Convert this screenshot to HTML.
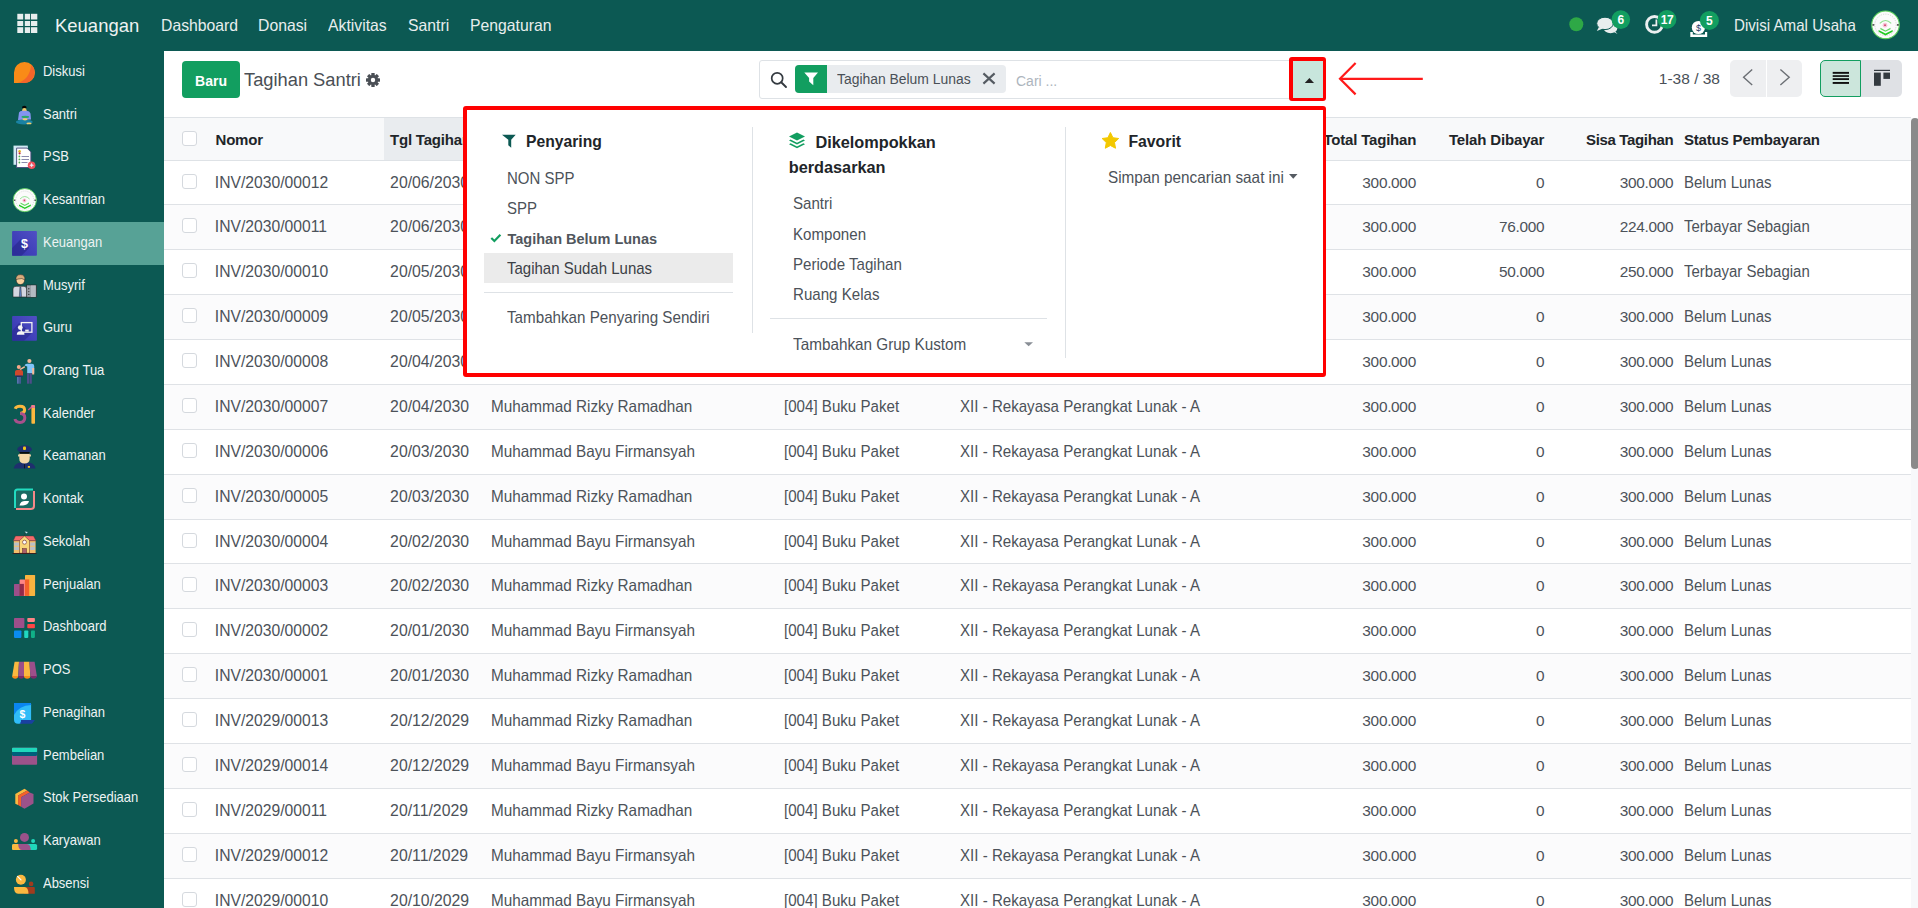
<!DOCTYPE html><html><head><meta charset="utf-8"><style>
html,body{margin:0;padding:0}
body{width:1918px;height:908px;position:relative;overflow:hidden;background:#fff;font-family:"Liberation Sans",sans-serif}
.t{position:absolute;white-space:nowrap;line-height:1.117}
</style></head><body>
<div style="position:absolute;left:0px;top:0px;width:1918px;height:51px;background:#0c5953"></div>
<div style="position:absolute;left:164px;top:51px;width:1754px;height:857px;background:#fff"></div>
<div style="position:absolute;left:0px;top:51px;width:164px;height:857px;background:#0c5953"></div>
<svg style="position:absolute;left:0px;top:0px" width="50" height="50" viewBox="0 0 50 50"><rect x="17.3" y="13.8" width="5.9" height="5.7" fill="#e8eeee"/><rect x="17.3" y="21" width="5.9" height="5" fill="#e8eeee"/><rect x="17.3" y="27.2" width="5.9" height="5.8" fill="#e8eeee"/><rect x="24.8" y="13.8" width="5.3" height="5.7" fill="#e8eeee"/><rect x="24.8" y="21" width="5.3" height="5" fill="#e8eeee"/><rect x="24.8" y="27.2" width="5.3" height="5.8" fill="#e8eeee"/><rect x="31" y="13.8" width="6.3" height="5.7" fill="#e8eeee"/><rect x="31" y="21" width="6.3" height="5" fill="#e8eeee"/><rect x="31" y="27.2" width="6.3" height="5.8" fill="#e8eeee"/></svg>
<div class="t" style="left:54.50px;top:15px;line-height:21px;font-size:19px;color:#eef2f2;transform:scaleX(0.972);transform-origin:0 0;">Keuangan</div>
<div class="t" style="left:160.50px;top:16px;line-height:18px;font-size:16.5px;color:#e8eeee;transform:scaleX(0.955);transform-origin:0 0;">Dashboard</div>
<div class="t" style="left:258.40px;top:16px;line-height:18px;font-size:16.5px;color:#e8eeee;transform:scaleX(0.955);transform-origin:0 0;">Donasi</div>
<div class="t" style="left:327.50px;top:16px;line-height:18px;font-size:16.5px;color:#e8eeee;transform:scaleX(0.955);transform-origin:0 0;">Aktivitas</div>
<div class="t" style="left:408.00px;top:16px;line-height:18px;font-size:16.5px;color:#e8eeee;transform:scaleX(0.955);transform-origin:0 0;">Santri</div>
<div class="t" style="left:470.00px;top:16px;line-height:18px;font-size:16.5px;color:#e8eeee;transform:scaleX(0.955);transform-origin:0 0;">Pengaturan</div>
<svg style="position:absolute;left:1560px;top:0px" width="170" height="51" viewBox="1560 0 170 51"><circle cx="1576.3" cy="24.3" r="7" fill="#2ea846"/><ellipse cx="1610.5" cy="28.6" rx="6.8" ry="4.6" fill="#e8eeee"/><path d="M1612 31 L1617.5 34 L1613 29 Z" fill="#e8eeee"/><ellipse cx="1605" cy="23.4" rx="8.3" ry="6.2" fill="#e8eeee" stroke="#0c5953" stroke-width="1"/><path d="M1599 27 L1596.8 31 L1603 28.5 Z" fill="#e8eeee"/><circle cx="1654.5" cy="24.4" r="7.9" fill="none" stroke="#eceff0" stroke-width="2.9"/><path d="M1656.4 19.6 V25.4 H1652" fill="none" stroke="#eceff0" stroke-width="1.8"/><path d="M1690.3 32.1 H1692.8 V34.6 H1705 V32.1 H1707.2 V36.9 H1690.3 Z" fill="#ffffff"/><circle cx="1698.4" cy="27.5" r="6.6" fill="#ffffff"/><text x="1698.6" y="31.2" font-size="9" font-weight="400" text-anchor="middle" fill="#1a3a6a" font-family="Liberation Sans">$</text><circle cx="1620.8" cy="19.6" r="9.3" fill="#129e60"/><circle cx="1667" cy="19.4" r="9.4" fill="#129e60"/><circle cx="1709.4" cy="20.4" r="9.5" fill="#129e60"/><text x="1620.8" y="24" font-size="12" font-weight="700" text-anchor="middle" fill="#fff" font-family="Liberation Sans">6</text><text x="1667" y="23.8" font-size="12" font-weight="700" text-anchor="middle" fill="#fff" font-family="Liberation Sans" letter-spacing="-0.5">17</text><text x="1709.4" y="24.8" font-size="12" font-weight="700" text-anchor="middle" fill="#fff" font-family="Liberation Sans">5</text></svg>
<div class="t" style="left:1734.30px;top:16px;line-height:18px;font-size:16.5px;color:#e8eeee;transform:scaleX(0.917);transform-origin:0 0;">Divisi Amal Usaha</div>
<svg style="position:absolute;left:1870px;top:10px" width="30" height="30" viewBox="0 0 30 30"><g transform="translate(15.5 14.8) scale(1.19) translate(-14.8 -15.1)">
<circle cx="14.8" cy="15.1" r="11.6" fill="#fbfbfb" stroke="#5bd05b" stroke-width="0.9"/>
<circle cx="14.8" cy="15.1" r="9" fill="none" stroke="#c8c8c8" stroke-width="0.6" stroke-dasharray="1 1"/>
<path d="M10 14 Q14.8 9 19.6 14" fill="none" stroke="#8fe08f" stroke-width="0.9"/>
<circle cx="14.4" cy="15.4" r="2" fill="#f5c5d5"/><circle cx="14.4" cy="15.4" r="0.8" fill="#d04070"/>
<path d="M10.5 17.5 L14.8 19.8 L19 17.5 L19 18.8 L14.8 21 L10.5 18.8 Z" fill="#60d860"/>
<path d="M9 19.5 L14.8 22.5 L20.8 19.5 L20.8 21 L14.8 24 L9 21 Z" fill="#22cc22"/>
<rect x="3.8" y="14.6" width="1.6" height="1.2" fill="#333"/><rect x="24.4" y="14.6" width="1.6" height="1.2" fill="#333"/>
</g></svg>
<div class="t" style="left:43.20px;top:62px;line-height:17px;font-size:15px;color:#eef3f3;transform:scaleX(0.865);transform-origin:0 0;">Diskusi</div>
<svg style="position:absolute;left:10px;top:58px" width="30" height="30" viewBox="0 0 30 30">
<path d="M4 14.5 A10.5 10.5 0 1 1 14.5 25 L4 25 Z" fill="#f98b17"/>
<path d="M21.2 6.8 A10.5 10.5 0 0 1 14.5 25 L7.5 25 Q19.8 21.5 21.2 6.8 Z" fill="#f4652a"/>
</svg>
<div class="t" style="left:43.20px;top:105px;line-height:17px;font-size:15px;color:#eef3f3;transform:scaleX(0.865);transform-origin:0 0;">Santri</div>
<svg style="position:absolute;left:10px;top:100px" width="30" height="30" viewBox="0 0 30 30">
<ellipse cx="14.3" cy="7.2" rx="2.3" ry="1.5" fill="#050505"/>
<ellipse cx="14.4" cy="10.2" rx="2.2" ry="2.3" fill="#f5c96a"/>
<path d="M9 12.5 Q10 10.7 12.5 10.8 L16.5 10.8 Q19.8 11 20.5 13.5 L21 19.5 L8 20 Z" fill="#8494f0"/>
<ellipse cx="14.3" cy="22" rx="8.4" ry="2.6" fill="#1a82a3"/>
<ellipse cx="15.3" cy="16.9" rx="3.8" ry="1.1" fill="#2aa86a"/>
<ellipse cx="15" cy="19.3" rx="2.6" ry="1.1" fill="#f0cc70"/>
<ellipse cx="19" cy="23.4" rx="2.6" ry="0.9" fill="#f0d070"/>
</svg>
<div class="t" style="left:43.20px;top:147px;line-height:17px;font-size:15px;color:#eef3f3;transform:scaleX(0.865);transform-origin:0 0;">PSB</div>
<svg style="position:absolute;left:10px;top:142px" width="30" height="30" viewBox="0 0 30 30">
<rect x="3.5" y="3.6" width="14.3" height="19.2" fill="#d2eaf5"/>
<path d="M6.6 6.1 H17 L20.9 10 V25.5 H6.6 Z" fill="#ffffff" stroke="#48487a" stroke-width="0.9"/>
<circle cx="9.6" cy="9.2" r="1.2" fill="#e0b020"/><circle cx="9.6" cy="11.3" r="1.1" fill="#c03040"/>
<circle cx="9.4" cy="14.4" r="0.9" fill="#50b050"/><circle cx="9.4" cy="17.4" r="0.9" fill="#50b050"/><circle cx="9.4" cy="20.5" r="0.9" fill="#50b050"/>
<rect x="11.5" y="14" width="7.5" height="0.7" fill="#5a5a8a"/><rect x="11.5" y="17" width="7.5" height="0.7" fill="#5a5a8a"/><rect x="11.5" y="20.2" width="6" height="0.7" fill="#5a5a8a"/>
<circle cx="21.6" cy="23.2" r="3.8" fill="#f0535f"/>
<path d="M21.6 20.8 L22.4 22.4 L24 23.2 L22.4 24 L21.6 25.6 L20.8 24 L19.2 23.2 L20.8 22.4 Z" fill="#e8eaf5"/>
</svg>
<div class="t" style="left:43.20px;top:190px;line-height:17px;font-size:15px;color:#eef3f3;transform:scaleX(0.865);transform-origin:0 0;">Kesantrian</div>
<svg style="position:absolute;left:10px;top:185px" width="30" height="30" viewBox="0 0 30 30">
<circle cx="14.8" cy="15.1" r="11.6" fill="#fbfbfb" stroke="#5bd05b" stroke-width="0.9"/>
<circle cx="14.8" cy="15.1" r="9" fill="none" stroke="#c8c8c8" stroke-width="0.6" stroke-dasharray="1 1"/>
<path d="M10 14 Q14.8 9 19.6 14" fill="none" stroke="#8fe08f" stroke-width="0.9"/>
<circle cx="14.4" cy="15.4" r="2" fill="#f5c5d5"/><circle cx="14.4" cy="15.4" r="0.8" fill="#d04070"/>
<path d="M10.5 17.5 L14.8 19.8 L19 17.5 L19 18.8 L14.8 21 L10.5 18.8 Z" fill="#60d860"/>
<path d="M9 19.5 L14.8 22.5 L20.8 19.5 L20.8 21 L14.8 24 L9 21 Z" fill="#22cc22"/>
<rect x="3.8" y="14.6" width="1.6" height="1.2" fill="#333"/><rect x="24.4" y="14.6" width="1.6" height="1.2" fill="#333"/>
</svg>
<div style="position:absolute;left:0px;top:222px;width:164px;height:43px;background:#57a296"></div>
<div class="t" style="left:43.20px;top:233px;line-height:17px;font-size:15px;color:#eef3f3;transform:scaleX(0.865);transform-origin:0 0;">Keuangan</div>
<svg style="position:absolute;left:10px;top:228px" width="30" height="30" viewBox="0 0 30 30">
<defs><linearGradient id="gk" x1="0" y1="1" x2="1" y2="0"><stop offset="0" stop-color="#3434b0"/><stop offset="1" stop-color="#5050c4"/></linearGradient></defs>
<rect x="2.1" y="3.1" width="24.8" height="24.7" rx="0.8" fill="url(#gk)"/>
<path d="M2.1 20 L11 11 L19 20 L11.5 27.8 H2.1 Z" fill="#2a2a90" opacity="0.7"/>
<text x="14.5" y="19.7" font-size="12.5" font-weight="700" text-anchor="middle" fill="#ffffff" font-family="Liberation Sans">$</text>
</svg>
<div class="t" style="left:43.20px;top:276px;line-height:17px;font-size:15px;color:#eef3f3;transform:scaleX(0.865);transform-origin:0 0;">Musyrif</div>
<svg style="position:absolute;left:10px;top:270px" width="30" height="30" viewBox="0 0 30 30">
<rect x="16.6" y="15" width="9.8" height="12.2" fill="#9aa0a8" stroke="#222" stroke-width="0.6"/>
<rect x="21" y="15.5" width="4.5" height="11.5" fill="#b5bac2"/>
<circle cx="18.8" cy="18.8" r="0.7" fill="#333"/><circle cx="18.8" cy="21.6" r="0.7" fill="#333"/><circle cx="18.8" cy="24.4" r="0.7" fill="#333"/>
<path d="M3 27 V19 Q3 16.3 6 16.3 H14 Q16.6 16.3 16.6 19 V27 Z" fill="#d4d6e0" stroke="#222" stroke-width="0.6"/>
<path d="M9.9 17 L10.9 17 L11.6 26.8 L9.3 26.8 Z" fill="#5a80c0" stroke="#222" stroke-width="0.4"/>
<circle cx="10.4" cy="10.4" r="4.2" fill="#f7d09c" stroke="#222" stroke-width="0.6"/>
<path d="M5.8 10 Q5.8 4.6 10.4 4.6 Q15 4.6 15 10 Q12 7.5 8 9 Z" fill="#d9ac7c" stroke="#222" stroke-width="0.5"/>
</svg>
<div class="t" style="left:43.20px;top:318px;line-height:17px;font-size:15px;color:#eef3f3;transform:scaleX(0.865);transform-origin:0 0;">Guru</div>
<svg style="position:absolute;left:10px;top:313px" width="30" height="30" viewBox="0 0 30 30">
<defs><linearGradient id="gg" x1="0" y1="1" x2="1" y2="0"><stop offset="0" stop-color="#3434b0"/><stop offset="1" stop-color="#5050c4"/></linearGradient></defs>
<rect x="2.1" y="3.1" width="24.8" height="24.7" rx="0.8" fill="url(#gg)"/>
<path d="M2.1 18 L9 10 L22 20 L14 27.8 H2.1 Z" fill="#2a2a90" opacity="0.6"/>
<rect x="11.3" y="9.6" width="10.6" height="9.6" fill="none" stroke="#f2f2f2" stroke-width="1.3"/>
<rect x="15.2" y="16.6" width="3.5" height="2" fill="#f2f2f2"/>
<circle cx="10.3" cy="14.6" r="2.4" fill="#f5f5f5"/>
<path d="M6.8 21.8 Q6.8 18.3 10 18.3 H11.5 Q14.5 18.3 14.5 21.8 Z" fill="#f5f5f5"/>
</svg>
<div class="t" style="left:43.20px;top:361px;line-height:17px;font-size:15px;color:#eef3f3;transform:scaleX(0.865);transform-origin:0 0;">Orang Tua</div>
<svg style="position:absolute;left:10px;top:356px" width="30" height="30" viewBox="0 0 30 30">
<circle cx="19.4" cy="5" r="2.1" fill="#f8b898"/>
<path d="M14.5 9.5 Q15 7.8 17 7.8 H22 Q24.2 7.8 24.2 10 V17.2 H17.2 V10.5 Z" fill="#80c4f8"/>
<rect x="22.2" y="12" width="2" height="6.5" fill="#f8b898"/>
<rect x="17" y="17.2" width="2.2" height="10.5" fill="#4e4d8a"/><rect x="19.6" y="17.2" width="2.2" height="10.5" fill="#4e4d8a"/>
<path d="M14.5 10 L9.5 13 L10.5 14 L15 11.5 Z" fill="#f8b898"/>
<circle cx="8.8" cy="11" r="2" fill="#f8a888"/>
<path d="M5 16 Q5 13.8 8.8 13.8 Q13 13.8 13 16 V19.8 H5 Z" fill="#d0482c"/>
<rect x="5.2" y="19.6" width="7.6" height="1.2" fill="#2a2a6a"/>
<rect x="7" y="21" width="1.8" height="6.7" fill="#5a70b0"/><rect x="9.1" y="21" width="1.8" height="6.7" fill="#4a5a9a"/>
</svg>
<div class="t" style="left:43.20px;top:404px;line-height:17px;font-size:15px;color:#eef3f3;transform:scaleX(0.865);transform-origin:0 0;">Kalender</div>
<svg style="position:absolute;left:10px;top:398px" width="30" height="30" viewBox="0 0 30 30">
<path d="M5.2 10.8 Q6 8.3 10 8.3 Q14.6 8.3 14.6 12 Q14.6 15 10.2 15.6" fill="none" stroke="#fbb83f" stroke-width="3"/>
<path d="M10.2 15.6 Q14.8 15.8 14.8 19.8 Q14.8 24.4 10 24.4 Q5.6 24.4 5 21" fill="none" stroke="#a8508c" stroke-width="3"/>
<rect x="21.4" y="7.2" width="3.6" height="18.6" rx="0.8" fill="#fbb83f"/>
<path d="M17.8 11.5 L22 7.4 Q23.5 6.8 25 7.6 L25 9.8 L21.4 10 L18.8 12.6 Z" fill="#c04f90"/>
<path d="M21.4 7.3 Q23.5 6.6 25 7.8 V9.8 H21.4 Z" fill="#f08090"/>
</svg>
<div class="t" style="left:43.20px;top:446px;line-height:17px;font-size:15px;color:#eef3f3;transform:scaleX(0.865);transform-origin:0 0;">Keamanan</div>
<svg style="position:absolute;left:10px;top:441px" width="30" height="30" viewBox="0 0 30 30">
<path d="M3.7 27.4 Q4.5 22.6 10.5 21.6 H19 Q24.8 22.6 25.5 27.4 Z" fill="#1f2f6e"/>
<rect x="14" y="23.2" width="0.8" height="4.2" fill="#111"/>
<rect x="17.8" y="25" width="2.2" height="1.8" fill="#f0c020"/>
<path d="M9.3 12.5 H19.7 V17.5 Q19.7 22.5 14.5 22.5 Q9.3 22.5 9.3 17.5 Z" fill="#f8d8a8"/>
<ellipse cx="9" cy="14.5" rx="0.9" ry="1.2" fill="#f8d8a8"/><ellipse cx="20" cy="14.5" rx="0.9" ry="1.2" fill="#f8d8a8"/>
<path d="M7.2 8.5 Q7.5 5 14.5 4.2 Q21.5 5 22 8.5 Q21 11.3 14.5 11.5 Q8 11.3 7.2 8.5 Z" fill="#1f2f6e"/>
<path d="M9.6 11 H19.6 V12.8 H9.6 Z" fill="#0a0a0a"/>
<rect x="13" y="5.5" width="3" height="3.5" rx="1" fill="#f0c818"/>
</svg>
<div class="t" style="left:43.20px;top:489px;line-height:17px;font-size:15px;color:#eef3f3;transform:scaleX(0.865);transform-origin:0 0;">Kontak</div>
<svg style="position:absolute;left:10px;top:484px" width="30" height="30" viewBox="0 0 30 30">
<rect x="5.5" y="6" width="18" height="18" fill="#186a62"/>
<path d="M5 24 V8 Q5 5.5 7.5 5.5 H23" fill="none" stroke="#22dcc0" stroke-width="2"/>
<path d="M24 7 V22 Q24 25 21 25 H6" fill="none" stroke="#f58888" stroke-width="2"/>
<circle cx="14" cy="12.4" r="3" fill="#ffffff"/>
<path d="M9.5 21.4 Q10.5 17 15 17 H19 Q18 21.4 13 21.4 Z" fill="#ffffff"/>
</svg>
<div class="t" style="left:43.20px;top:532px;line-height:17px;font-size:15px;color:#eef3f3;transform:scaleX(0.865);transform-origin:0 0;">Sekolah</div>
<svg style="position:absolute;left:10px;top:527px" width="30" height="30" viewBox="0 0 30 30">
<rect x="3.8" y="14" width="21.8" height="12.2" fill="#f5be6a"/>
<rect x="4.2" y="15.5" width="4.8" height="3.2" fill="#b8c0c8"/><rect x="4.2" y="19.8" width="4.8" height="3.2" fill="#b8c0c8"/>
<rect x="20.2" y="15.5" width="4.8" height="3.2" fill="#b8c0c8"/><rect x="20.2" y="19.8" width="4.8" height="3.2" fill="#b8c0c8"/>
<path d="M3.2 13.8 L5.5 9 H23.5 L26 13.8 Z" fill="#f26b6b" stroke="#5a2a2a" stroke-width="0.4"/>
<path d="M9.5 26.2 V13.5 L14.5 9 L19.5 13.5 V26.2 Z" fill="#f8d67a" stroke="#5a2a2a" stroke-width="0.5"/>
<circle cx="14.5" cy="15.2" r="2" fill="#fff" stroke="#6a2a2a" stroke-width="0.6"/>
<rect x="12.4" y="21.5" width="4.2" height="4.7" fill="#a8606a" stroke="#4a1a1a" stroke-width="0.4"/>
<rect x="2.5" y="26" width="24" height="0.9" fill="#3a1a1a"/>
<path d="M14.5 9 V5.5" stroke="#333" stroke-width="0.4"/><path d="M14.6 4.5 L17.8 5 L16.5 6.5 Z" fill="#c8e0ee"/>
</svg>
<div class="t" style="left:43.20px;top:575px;line-height:17px;font-size:15px;color:#eef3f3;transform:scaleX(0.865);transform-origin:0 0;">Penjualan</div>
<svg style="position:absolute;left:10px;top:570px" width="30" height="30" viewBox="0 0 30 30">
<rect x="15" y="5" width="10.1" height="20.9" rx="0.6" fill="#f9b440"/>
<rect x="9.6" y="9.4" width="5.4" height="16.5" rx="0.5" fill="#ff8585"/>
<rect x="14.9" y="9.4" width="4.3" height="16.5" fill="#f5602a"/>
<rect x="4" y="13.9" width="5.6" height="12" rx="0.5" fill="#9c4f8a"/>
<rect x="9.6" y="13.9" width="4.3" height="12" fill="#932a4a"/>
</svg>
<div class="t" style="left:43.20px;top:617px;line-height:17px;font-size:15px;color:#eef3f3;transform:scaleX(0.865);transform-origin:0 0;">Dashboard</div>
<svg style="position:absolute;left:10px;top:612px" width="30" height="30" viewBox="0 0 30 30">
<rect x="4" y="6" width="10.4" height="10" rx="0.8" fill="#9e4f8a"/>
<rect x="17.3" y="6" width="7.6" height="3.9" rx="0.8" fill="#ff8585"/>
<rect x="17.3" y="12" width="7.6" height="4.2" rx="0.8" fill="#ff4545"/>
<rect x="4" y="18.5" width="7.4" height="7.4" rx="0.8" fill="#0a8cf0"/>
<rect x="14.2" y="18.5" width="4.1" height="7.4" rx="0.8" fill="#20d8c0"/>
<rect x="21" y="18.5" width="3.9" height="7.4" rx="0.8" fill="#10b088"/>
</svg>
<div class="t" style="left:43.20px;top:660px;line-height:17px;font-size:15px;color:#eef3f3;transform:scaleX(0.865);transform-origin:0 0;">POS</div>
<svg style="position:absolute;left:10px;top:655px" width="30" height="30" viewBox="0 0 30 30">
<path d="M4.6 6.8 H9 L8.2 21.6 H2.1 Z" fill="#fbb840"/>
<path d="M9 6.8 H14 L14 21.6 H8.2 Z" fill="#9c4f8a"/>
<path d="M14 6.8 H19.4 L20.4 21.6 H14 Z" fill="#fbb840"/>
<path d="M19.4 6.8 H24.6 L26.9 21.6 H20.4 Z" fill="#9c4f8a"/>
<path d="M2.1 21 H8.2 Q8 23.8 5.2 23.8 Q2.3 23.8 2.1 21 Z" fill="#f88c1a"/>
<path d="M8.2 21 H14 Q14 23.8 11.1 23.8 Q8.2 23.8 8.2 21 Z" fill="#7a2a6a"/>
<path d="M14 21 H20.4 Q20.4 23.8 17.2 23.8 Q14 23.8 14 21 Z" fill="#f88c1a"/>
<path d="M20.4 21 H26.9 Q26.6 23.8 23.7 23.8 Q20.6 23.8 20.4 21 Z" fill="#7a2a6a"/>
</svg>
<div class="t" style="left:43.20px;top:703px;line-height:17px;font-size:15px;color:#eef3f3;transform:scaleX(0.865);transform-origin:0 0;">Penagihan</div>
<svg style="position:absolute;left:10px;top:698px" width="30" height="30" viewBox="0 0 30 30">
<path d="M4 5 H20.2 Q21.1 5 21.1 6 V22 H11.2 V25.8 H8 Q4 25.8 4 21.8 Z" fill="#30bcf8"/>
<path d="M4 5 H20.2 Q21.1 5 21.1 6 V7 Q9 7.5 4 17 Z" fill="#0a86f0"/>
<path d="M11.2 22 H24.9 L22 25.8 H9.5 Q11.2 25 11.2 22 Z" fill="#1a40a0"/>
<text x="12.4" y="19.6" font-size="10.5" font-weight="700" text-anchor="middle" fill="#ffffff" font-family="Liberation Sans">$</text>
</svg>
<div class="t" style="left:43.20px;top:746px;line-height:17px;font-size:15px;color:#eef3f3;transform:scaleX(0.865);transform-origin:0 0;">Pembelian</div>
<svg style="position:absolute;left:10px;top:741px" width="30" height="30" viewBox="0 0 30 30">
<rect x="2" y="6.8" width="25.1" height="17" rx="0.8" fill="#9c528a"/>
<rect x="2" y="6.8" width="25.1" height="4.2" rx="0.8" fill="#20d8bc"/>
<path d="M2 10.9 H27.1 V13.8 Q27.1 14.9 26 14.9 H3.1 Q2 14.9 2 13.8 Z" fill="#005f7a"/>
</svg>
<div class="t" style="left:43.20px;top:788px;line-height:17px;font-size:15px;color:#eef3f3;transform:scaleX(0.865);transform-origin:0 0;">Stok Persediaan</div>
<svg style="position:absolute;left:10px;top:784px" width="30" height="30" viewBox="0 0 30 30">
<path d="M5.3 9.9 L14.5 4.8 L17.2 6.6 L8.1 11.4 V21.1 L5.3 19.8 Z" fill="#fbb840"/>
<path d="M8.1 11.4 L17.2 6.6 L19.8 8.6 L11.1 13.2 V22.8 L8.1 21.1 Z" fill="#f5602a"/>
<path d="M11.1 13.2 L19.8 8.6 L23.5 9.9 V19.5 L14.5 24.8 L11.1 22.8 Z" fill="#9c528a"/>
</svg>
<div class="t" style="left:43.20px;top:831px;line-height:17px;font-size:15px;color:#eef3f3;transform:scaleX(0.865);transform-origin:0 0;">Karyawan</div>
<svg style="position:absolute;left:10px;top:826px" width="30" height="30" viewBox="0 0 30 30">
<circle cx="14.5" cy="11.4" r="4.5" fill="#9c528a"/>
<circle cx="5.9" cy="14.9" r="2" fill="#fbb840"/>
<circle cx="23.1" cy="14.9" r="2" fill="#20d8bc"/>
<rect x="2" y="18" width="25.1" height="6" rx="1.6" fill="#20d8bc"/>
<path d="M3.6 18 H12 L12 24 H3.6 Q2 24 2 22.4 V19.6 Q2 18 3.6 18 Z" fill="#fbb840"/>
<path d="M8.2 18 H17 Q20.5 18 20.8 24 H12 Q8.5 24 8.2 18 Z" fill="#9c528a"/>
</svg>
<div class="t" style="left:43.20px;top:874px;line-height:17px;font-size:15px;color:#eef3f3;transform:scaleX(0.865);transform-origin:0 0;">Absensi</div>
<svg style="position:absolute;left:10px;top:869px" width="30" height="30" viewBox="0 0 30 30">
<circle cx="10.9" cy="10.7" r="5" fill="#fbb840"/>
<path d="M7.6 7.4 L11 10.9" stroke="#ffffff" stroke-width="1.2" stroke-linecap="round"/>
<circle cx="21.1" cy="14.9" r="2.3" fill="#a03c1e"/>
<path d="M14 18 H23.8 Q24.8 18 24.8 19 V24.8 H14 Z" fill="#a03c1e"/>
<path d="M4 18 H14.5 Q18.3 18 18.5 24.8 H8 Q4 24.8 4 18 Z" fill="#fbb840"/>
</svg>
<div style="position:absolute;left:182px;top:61px;width:58px;height:37px;background:#129e60;border-radius:4px"></div>
<div class="t" style="left:195.10px;top:73px;line-height:16px;font-size:14px;font-weight:700;color:#ffffff;">Baru</div>
<div class="t" style="left:244.20px;top:69px;line-height:21px;font-size:19.03px;color:#4a4f55;transform:scaleX(0.9615);transform-origin:0 0;">Tagihan Santri</div>
<div style="position:absolute;left:758.5px;top:60px;width:567px;height:39px;border:1px solid #dee2e6;border-radius:3px;box-sizing:border-box;background:#fff"></div>
<div style="position:absolute;left:795px;top:65.3px;width:211px;height:27.7px;background:#e9ecef;border-radius:4px"></div>
<div style="position:absolute;left:795px;top:65.3px;width:32px;height:27.7px;background:#129e60;border-radius:4px 0 0 4px"></div>
<div class="t" style="left:836.80px;top:71px;line-height:16px;font-size:14.82px;color:#495057;transform:scaleX(0.9381);transform-origin:0 0;">Tagihan Belum Lunas</div>
<div class="t" style="left:1016.00px;top:73px;line-height:16px;font-size:14px;color:#adb5bd;">Cari ...</div>
<div class="t" style="right:198.00px;top:70px;line-height:17px;font-size:15.5px;color:#495057;">1-38 / 38</div>
<div style="position:absolute;left:1730.3px;top:60.2px;width:35.5px;height:36.8px;background:#eeeff1;border-radius:5px 0 0 5px"></div>
<div style="position:absolute;left:1766.8px;top:60.2px;width:35.2px;height:36.8px;background:#eeeff1;border-radius:0 5px 5px 0"></div>
<div style="position:absolute;left:1820px;top:60.2px;width:41px;height:36.8px;background:#cce6dc;border:1px solid #129e60;border-radius:5px 0 0 5px;box-sizing:border-box"></div>
<div style="position:absolute;left:1861px;top:60.2px;width:40.8px;height:36.8px;background:#dfe1e5;border-radius:0 5px 5px 0"></div>
<svg style="position:absolute;left:363.8px;top:71px" width="18" height="18" viewBox="0 0 18 18"><g transform="translate(9 9)" fill="#4a4f55"><rect x="-1.7" y="-7" width="3.4" height="3.8" rx="0.5" transform="rotate(0)"/><rect x="-1.7" y="-7" width="3.4" height="3.8" rx="0.5" transform="rotate(45)"/><rect x="-1.7" y="-7" width="3.4" height="3.8" rx="0.5" transform="rotate(90)"/><rect x="-1.7" y="-7" width="3.4" height="3.8" rx="0.5" transform="rotate(135)"/><rect x="-1.7" y="-7" width="3.4" height="3.8" rx="0.5" transform="rotate(180)"/><rect x="-1.7" y="-7" width="3.4" height="3.8" rx="0.5" transform="rotate(225)"/><rect x="-1.7" y="-7" width="3.4" height="3.8" rx="0.5" transform="rotate(270)"/><rect x="-1.7" y="-7" width="3.4" height="3.8" rx="0.5" transform="rotate(315)"/><circle r="5.1"/></g><circle cx="9" cy="9" r="2.2" fill="#fff"/></svg>
<svg style="position:absolute;left:765px;top:66px" width="26" height="26" viewBox="0 0 26 26"><circle cx="12.2" cy="12.3" r="5.5" fill="none" stroke="#343a40" stroke-width="1.7"/><path d="M16.2 16.3 L21 21" stroke="#343a40" stroke-width="1.9" stroke-linecap="round"/></svg>
<svg style="position:absolute;left:795px;top:65px" width="32" height="28" viewBox="0 0 32 28"><path d="M9.3 7.6 H23 L18.3 13 V20.3 L14.1 16.6 V13 Z" fill="#ffffff"/></svg>
<svg style="position:absolute;left:980px;top:70px" width="18" height="18" viewBox="0 0 18 18"><path d="M3.4 3.4 L14.6 13.6 M14.6 3.4 L3.4 13.6" stroke="#555b62" stroke-width="2.1"/></svg>
<svg style="position:absolute;left:1730px;top:60px" width="72" height="37" viewBox="0 0 72 37"><path d="M22.2 9.5 L13.6 17.3 L22.2 25" fill="none" stroke="#6b6f74" stroke-width="1.4"/><path d="M50.4 9.5 L59.2 17.3 L50.4 25" fill="none" stroke="#6b6f74" stroke-width="1.4"/></svg>
<svg style="position:absolute;left:1820px;top:60px" width="82" height="37" viewBox="0 0 82 37"><rect x="12.7" y="11.9" width="16.3" height="1.9" fill="#111"/><rect x="12.7" y="15.2" width="16.3" height="1.7" fill="#111"/><rect x="12.7" y="18.2" width="16.3" height="1.8" fill="#111"/><rect x="12.7" y="22" width="16.3" height="1.9" fill="#111"/><rect x="54" y="9.8" width="16" height="1.2" fill="#343a40"/><rect x="54" y="12.6" width="6.8" height="13.2" fill="#343a40"/><rect x="63.4" y="12.6" width="6.6" height="6.3" fill="#343a40"/></svg>
<div style="position:absolute;left:164px;top:117px;width:1747px;height:1px;background:#dee2e6"></div>
<div style="position:absolute;left:164px;top:118px;width:1747px;height:42px;background:#f8f9fa"></div>
<div style="position:absolute;left:384px;top:118px;width:200px;height:42px;background:#e9ecef"></div>
<div style="position:absolute;left:164px;top:160px;width:1747px;height:1px;background:#dee2e6"></div>
<div class="t" style="left:215.50px;top:131px;line-height:17px;font-size:15px;font-weight:700;color:#212529;letter-spacing:-0.2px">Nomor</div>
<div class="t" style="left:390.00px;top:131px;line-height:17px;font-size:15px;font-weight:700;color:#212529;letter-spacing:-0.2px">Tgl Tagihan</div>
<div class="t" style="right:501.80px;top:131px;line-height:17px;font-size:15px;font-weight:700;color:#212529;letter-spacing:-0.2px">Total Tagihan</div>
<div class="t" style="right:373.80px;top:131px;line-height:17px;font-size:15px;font-weight:700;color:#212529;letter-spacing:-0.15px">Telah Dibayar</div>
<div class="t" style="right:244.70px;top:131px;line-height:17px;font-size:15px;font-weight:700;color:#212529;letter-spacing:-0.35px">Sisa Tagihan</div>
<div class="t" style="left:1684.00px;top:131px;line-height:17px;font-size:15px;font-weight:700;color:#212529;letter-spacing:-0.2px">Status Pembayaran</div>
<div style="position:absolute;left:182px;top:131px;width:15px;height:15px;border:1px solid #d5d9de;border-radius:3px;box-sizing:border-box;background:#fff"></div>
<div style="position:absolute;left:164px;top:204px;width:1747px;height:1px;background:#dfe2e6"></div>
<div style="position:absolute;left:182px;top:174px;width:15px;height:15px;border:1px solid #d5d9de;border-radius:3px;box-sizing:border-box;background:#fff"></div>
<div class="t" style="left:214.80px;top:174px;line-height:17px;font-size:15.7px;color:#4c5259;">INV/2030/00012</div>
<div class="t" style="left:390.10px;top:174px;line-height:17px;font-size:15.8px;color:#4c5259;">20/06/2030</div>
<div class="t" style="left:490.60px;top:173px;line-height:18px;font-size:16.31px;color:#4c5259;transform:scaleX(0.9381);transform-origin:0 0;">Muhammad Rizky Ramadhan</div>
<div class="t" style="left:783.80px;top:173px;line-height:18px;font-size:16.13px;color:#4c5259;transform:scaleX(0.9381);transform-origin:0 0;">[004] Buku Paket</div>
<div class="t" style="left:960.30px;top:173px;line-height:18px;font-size:16.1px;color:#4c5259;transform:scaleX(0.9381);transform-origin:0 0;">XII - Rekayasa Perangkat Lunak - A</div>
<div class="t" style="right:502.10px;top:174px;line-height:17px;font-size:15.4px;color:#4c5259;letter-spacing:-0.3px">300.000</div>
<div class="t" style="right:373.70px;top:174px;line-height:17px;font-size:15.4px;color:#4c5259;letter-spacing:-0.3px">0</div>
<div class="t" style="right:244.80px;top:174px;line-height:17px;font-size:15.4px;color:#4c5259;letter-spacing:-0.3px">300.000</div>
<div class="t" style="left:1684.40px;top:173px;line-height:18px;font-size:16.05px;color:#4c5259;transform:scaleX(0.9346);transform-origin:0 0;">Belum Lunas</div>
<div style="position:absolute;left:164px;top:205px;width:1747px;height:44px;background:#fbfbfc"></div>
<div style="position:absolute;left:164px;top:249px;width:1747px;height:1px;background:#dfe2e6"></div>
<div style="position:absolute;left:182px;top:218px;width:15px;height:15px;border:1px solid #d5d9de;border-radius:3px;box-sizing:border-box;background:#fff"></div>
<div class="t" style="left:214.80px;top:218px;line-height:17px;font-size:15.7px;color:#4c5259;">INV/2030/00011</div>
<div class="t" style="left:390.10px;top:218px;line-height:17px;font-size:15.8px;color:#4c5259;">20/06/2030</div>
<div class="t" style="left:490.60px;top:217px;line-height:18px;font-size:16.31px;color:#4c5259;transform:scaleX(0.9381);transform-origin:0 0;">Muhammad Bayu Firmansyah</div>
<div class="t" style="left:783.80px;top:217px;line-height:18px;font-size:16.13px;color:#4c5259;transform:scaleX(0.9381);transform-origin:0 0;">[004] Buku Paket</div>
<div class="t" style="left:960.30px;top:217px;line-height:18px;font-size:16.1px;color:#4c5259;transform:scaleX(0.9381);transform-origin:0 0;">XII - Rekayasa Perangkat Lunak - A</div>
<div class="t" style="right:502.10px;top:218px;line-height:17px;font-size:15.4px;color:#4c5259;letter-spacing:-0.3px">300.000</div>
<div class="t" style="right:373.70px;top:218px;line-height:17px;font-size:15.4px;color:#4c5259;letter-spacing:-0.3px">76.000</div>
<div class="t" style="right:244.80px;top:218px;line-height:17px;font-size:15.4px;color:#4c5259;letter-spacing:-0.3px">224.000</div>
<div class="t" style="left:1684.40px;top:217px;line-height:18px;font-size:16.05px;color:#4c5259;transform:scaleX(0.9346);transform-origin:0 0;">Terbayar Sebagian</div>
<div style="position:absolute;left:164px;top:294px;width:1747px;height:1px;background:#dfe2e6"></div>
<div style="position:absolute;left:182px;top:263px;width:15px;height:15px;border:1px solid #d5d9de;border-radius:3px;box-sizing:border-box;background:#fff"></div>
<div class="t" style="left:214.80px;top:263px;line-height:17px;font-size:15.7px;color:#4c5259;">INV/2030/00010</div>
<div class="t" style="left:390.10px;top:263px;line-height:17px;font-size:15.8px;color:#4c5259;">20/05/2030</div>
<div class="t" style="left:490.60px;top:262px;line-height:18px;font-size:16.31px;color:#4c5259;transform:scaleX(0.9381);transform-origin:0 0;">Muhammad Rizky Ramadhan</div>
<div class="t" style="left:783.80px;top:262px;line-height:18px;font-size:16.13px;color:#4c5259;transform:scaleX(0.9381);transform-origin:0 0;">[004] Buku Paket</div>
<div class="t" style="left:960.30px;top:262px;line-height:18px;font-size:16.1px;color:#4c5259;transform:scaleX(0.9381);transform-origin:0 0;">XII - Rekayasa Perangkat Lunak - A</div>
<div class="t" style="right:502.10px;top:263px;line-height:17px;font-size:15.4px;color:#4c5259;letter-spacing:-0.3px">300.000</div>
<div class="t" style="right:373.70px;top:263px;line-height:17px;font-size:15.4px;color:#4c5259;letter-spacing:-0.3px">50.000</div>
<div class="t" style="right:244.80px;top:263px;line-height:17px;font-size:15.4px;color:#4c5259;letter-spacing:-0.3px">250.000</div>
<div class="t" style="left:1684.40px;top:262px;line-height:18px;font-size:16.05px;color:#4c5259;transform:scaleX(0.9346);transform-origin:0 0;">Terbayar Sebagian</div>
<div style="position:absolute;left:164px;top:295px;width:1747px;height:44px;background:#fbfbfc"></div>
<div style="position:absolute;left:164px;top:339px;width:1747px;height:1px;background:#dfe2e6"></div>
<div style="position:absolute;left:182px;top:308px;width:15px;height:15px;border:1px solid #d5d9de;border-radius:3px;box-sizing:border-box;background:#fff"></div>
<div class="t" style="left:214.80px;top:308px;line-height:17px;font-size:15.7px;color:#4c5259;">INV/2030/00009</div>
<div class="t" style="left:390.10px;top:308px;line-height:17px;font-size:15.8px;color:#4c5259;">20/05/2030</div>
<div class="t" style="left:490.60px;top:307px;line-height:18px;font-size:16.31px;color:#4c5259;transform:scaleX(0.9381);transform-origin:0 0;">Muhammad Bayu Firmansyah</div>
<div class="t" style="left:783.80px;top:307px;line-height:18px;font-size:16.13px;color:#4c5259;transform:scaleX(0.9381);transform-origin:0 0;">[004] Buku Paket</div>
<div class="t" style="left:960.30px;top:307px;line-height:18px;font-size:16.1px;color:#4c5259;transform:scaleX(0.9381);transform-origin:0 0;">XII - Rekayasa Perangkat Lunak - A</div>
<div class="t" style="right:502.10px;top:308px;line-height:17px;font-size:15.4px;color:#4c5259;letter-spacing:-0.3px">300.000</div>
<div class="t" style="right:373.70px;top:308px;line-height:17px;font-size:15.4px;color:#4c5259;letter-spacing:-0.3px">0</div>
<div class="t" style="right:244.80px;top:308px;line-height:17px;font-size:15.4px;color:#4c5259;letter-spacing:-0.3px">300.000</div>
<div class="t" style="left:1684.40px;top:307px;line-height:18px;font-size:16.05px;color:#4c5259;transform:scaleX(0.9346);transform-origin:0 0;">Belum Lunas</div>
<div style="position:absolute;left:164px;top:384px;width:1747px;height:1px;background:#dfe2e6"></div>
<div style="position:absolute;left:182px;top:353px;width:15px;height:15px;border:1px solid #d5d9de;border-radius:3px;box-sizing:border-box;background:#fff"></div>
<div class="t" style="left:214.80px;top:353px;line-height:17px;font-size:15.7px;color:#4c5259;">INV/2030/00008</div>
<div class="t" style="left:390.10px;top:353px;line-height:17px;font-size:15.8px;color:#4c5259;">20/04/2030</div>
<div class="t" style="left:490.60px;top:352px;line-height:18px;font-size:16.31px;color:#4c5259;transform:scaleX(0.9381);transform-origin:0 0;">Muhammad Bayu Firmansyah</div>
<div class="t" style="left:783.80px;top:352px;line-height:18px;font-size:16.13px;color:#4c5259;transform:scaleX(0.9381);transform-origin:0 0;">[004] Buku Paket</div>
<div class="t" style="left:960.30px;top:352px;line-height:18px;font-size:16.1px;color:#4c5259;transform:scaleX(0.9381);transform-origin:0 0;">XII - Rekayasa Perangkat Lunak - A</div>
<div class="t" style="right:502.10px;top:353px;line-height:17px;font-size:15.4px;color:#4c5259;letter-spacing:-0.3px">300.000</div>
<div class="t" style="right:373.70px;top:353px;line-height:17px;font-size:15.4px;color:#4c5259;letter-spacing:-0.3px">0</div>
<div class="t" style="right:244.80px;top:353px;line-height:17px;font-size:15.4px;color:#4c5259;letter-spacing:-0.3px">300.000</div>
<div class="t" style="left:1684.40px;top:352px;line-height:18px;font-size:16.05px;color:#4c5259;transform:scaleX(0.9346);transform-origin:0 0;">Belum Lunas</div>
<div style="position:absolute;left:164px;top:385px;width:1747px;height:44px;background:#fbfbfc"></div>
<div style="position:absolute;left:164px;top:429px;width:1747px;height:1px;background:#dfe2e6"></div>
<div style="position:absolute;left:182px;top:398px;width:15px;height:15px;border:1px solid #d5d9de;border-radius:3px;box-sizing:border-box;background:#fff"></div>
<div class="t" style="left:214.80px;top:398px;line-height:17px;font-size:15.7px;color:#4c5259;">INV/2030/00007</div>
<div class="t" style="left:390.10px;top:398px;line-height:17px;font-size:15.8px;color:#4c5259;">20/04/2030</div>
<div class="t" style="left:490.60px;top:397px;line-height:18px;font-size:16.31px;color:#4c5259;transform:scaleX(0.9381);transform-origin:0 0;">Muhammad Rizky Ramadhan</div>
<div class="t" style="left:783.80px;top:397px;line-height:18px;font-size:16.13px;color:#4c5259;transform:scaleX(0.9381);transform-origin:0 0;">[004] Buku Paket</div>
<div class="t" style="left:960.30px;top:397px;line-height:18px;font-size:16.1px;color:#4c5259;transform:scaleX(0.9381);transform-origin:0 0;">XII - Rekayasa Perangkat Lunak - A</div>
<div class="t" style="right:502.10px;top:398px;line-height:17px;font-size:15.4px;color:#4c5259;letter-spacing:-0.3px">300.000</div>
<div class="t" style="right:373.70px;top:398px;line-height:17px;font-size:15.4px;color:#4c5259;letter-spacing:-0.3px">0</div>
<div class="t" style="right:244.80px;top:398px;line-height:17px;font-size:15.4px;color:#4c5259;letter-spacing:-0.3px">300.000</div>
<div class="t" style="left:1684.40px;top:397px;line-height:18px;font-size:16.05px;color:#4c5259;transform:scaleX(0.9346);transform-origin:0 0;">Belum Lunas</div>
<div style="position:absolute;left:164px;top:474px;width:1747px;height:1px;background:#dfe2e6"></div>
<div style="position:absolute;left:182px;top:443px;width:15px;height:15px;border:1px solid #d5d9de;border-radius:3px;box-sizing:border-box;background:#fff"></div>
<div class="t" style="left:214.80px;top:443px;line-height:17px;font-size:15.7px;color:#4c5259;">INV/2030/00006</div>
<div class="t" style="left:390.10px;top:443px;line-height:17px;font-size:15.8px;color:#4c5259;">20/03/2030</div>
<div class="t" style="left:490.60px;top:442px;line-height:18px;font-size:16.31px;color:#4c5259;transform:scaleX(0.9381);transform-origin:0 0;">Muhammad Bayu Firmansyah</div>
<div class="t" style="left:783.80px;top:442px;line-height:18px;font-size:16.13px;color:#4c5259;transform:scaleX(0.9381);transform-origin:0 0;">[004] Buku Paket</div>
<div class="t" style="left:960.30px;top:442px;line-height:18px;font-size:16.1px;color:#4c5259;transform:scaleX(0.9381);transform-origin:0 0;">XII - Rekayasa Perangkat Lunak - A</div>
<div class="t" style="right:502.10px;top:443px;line-height:17px;font-size:15.4px;color:#4c5259;letter-spacing:-0.3px">300.000</div>
<div class="t" style="right:373.70px;top:443px;line-height:17px;font-size:15.4px;color:#4c5259;letter-spacing:-0.3px">0</div>
<div class="t" style="right:244.80px;top:443px;line-height:17px;font-size:15.4px;color:#4c5259;letter-spacing:-0.3px">300.000</div>
<div class="t" style="left:1684.40px;top:442px;line-height:18px;font-size:16.05px;color:#4c5259;transform:scaleX(0.9346);transform-origin:0 0;">Belum Lunas</div>
<div style="position:absolute;left:164px;top:475px;width:1747px;height:44px;background:#fbfbfc"></div>
<div style="position:absolute;left:164px;top:519px;width:1747px;height:1px;background:#dfe2e6"></div>
<div style="position:absolute;left:182px;top:488px;width:15px;height:15px;border:1px solid #d5d9de;border-radius:3px;box-sizing:border-box;background:#fff"></div>
<div class="t" style="left:214.80px;top:488px;line-height:17px;font-size:15.7px;color:#4c5259;">INV/2030/00005</div>
<div class="t" style="left:390.10px;top:488px;line-height:17px;font-size:15.8px;color:#4c5259;">20/03/2030</div>
<div class="t" style="left:490.60px;top:487px;line-height:18px;font-size:16.31px;color:#4c5259;transform:scaleX(0.9381);transform-origin:0 0;">Muhammad Rizky Ramadhan</div>
<div class="t" style="left:783.80px;top:487px;line-height:18px;font-size:16.13px;color:#4c5259;transform:scaleX(0.9381);transform-origin:0 0;">[004] Buku Paket</div>
<div class="t" style="left:960.30px;top:487px;line-height:18px;font-size:16.1px;color:#4c5259;transform:scaleX(0.9381);transform-origin:0 0;">XII - Rekayasa Perangkat Lunak - A</div>
<div class="t" style="right:502.10px;top:488px;line-height:17px;font-size:15.4px;color:#4c5259;letter-spacing:-0.3px">300.000</div>
<div class="t" style="right:373.70px;top:488px;line-height:17px;font-size:15.4px;color:#4c5259;letter-spacing:-0.3px">0</div>
<div class="t" style="right:244.80px;top:488px;line-height:17px;font-size:15.4px;color:#4c5259;letter-spacing:-0.3px">300.000</div>
<div class="t" style="left:1684.40px;top:487px;line-height:18px;font-size:16.05px;color:#4c5259;transform:scaleX(0.9346);transform-origin:0 0;">Belum Lunas</div>
<div style="position:absolute;left:164px;top:563px;width:1747px;height:1px;background:#dfe2e6"></div>
<div style="position:absolute;left:182px;top:533px;width:15px;height:15px;border:1px solid #d5d9de;border-radius:3px;box-sizing:border-box;background:#fff"></div>
<div class="t" style="left:214.80px;top:533px;line-height:17px;font-size:15.7px;color:#4c5259;">INV/2030/00004</div>
<div class="t" style="left:390.10px;top:533px;line-height:17px;font-size:15.8px;color:#4c5259;">20/02/2030</div>
<div class="t" style="left:490.60px;top:532px;line-height:18px;font-size:16.31px;color:#4c5259;transform:scaleX(0.9381);transform-origin:0 0;">Muhammad Bayu Firmansyah</div>
<div class="t" style="left:783.80px;top:532px;line-height:18px;font-size:16.13px;color:#4c5259;transform:scaleX(0.9381);transform-origin:0 0;">[004] Buku Paket</div>
<div class="t" style="left:960.30px;top:532px;line-height:18px;font-size:16.1px;color:#4c5259;transform:scaleX(0.9381);transform-origin:0 0;">XII - Rekayasa Perangkat Lunak - A</div>
<div class="t" style="right:502.10px;top:533px;line-height:17px;font-size:15.4px;color:#4c5259;letter-spacing:-0.3px">300.000</div>
<div class="t" style="right:373.70px;top:533px;line-height:17px;font-size:15.4px;color:#4c5259;letter-spacing:-0.3px">0</div>
<div class="t" style="right:244.80px;top:533px;line-height:17px;font-size:15.4px;color:#4c5259;letter-spacing:-0.3px">300.000</div>
<div class="t" style="left:1684.40px;top:532px;line-height:18px;font-size:16.05px;color:#4c5259;transform:scaleX(0.9346);transform-origin:0 0;">Belum Lunas</div>
<div style="position:absolute;left:164px;top:564px;width:1747px;height:44px;background:#fbfbfc"></div>
<div style="position:absolute;left:164px;top:608px;width:1747px;height:1px;background:#dfe2e6"></div>
<div style="position:absolute;left:182px;top:577px;width:15px;height:15px;border:1px solid #d5d9de;border-radius:3px;box-sizing:border-box;background:#fff"></div>
<div class="t" style="left:214.80px;top:577px;line-height:17px;font-size:15.7px;color:#4c5259;">INV/2030/00003</div>
<div class="t" style="left:390.10px;top:577px;line-height:17px;font-size:15.8px;color:#4c5259;">20/02/2030</div>
<div class="t" style="left:490.60px;top:576px;line-height:18px;font-size:16.31px;color:#4c5259;transform:scaleX(0.9381);transform-origin:0 0;">Muhammad Rizky Ramadhan</div>
<div class="t" style="left:783.80px;top:576px;line-height:18px;font-size:16.13px;color:#4c5259;transform:scaleX(0.9381);transform-origin:0 0;">[004] Buku Paket</div>
<div class="t" style="left:960.30px;top:576px;line-height:18px;font-size:16.1px;color:#4c5259;transform:scaleX(0.9381);transform-origin:0 0;">XII - Rekayasa Perangkat Lunak - A</div>
<div class="t" style="right:502.10px;top:577px;line-height:17px;font-size:15.4px;color:#4c5259;letter-spacing:-0.3px">300.000</div>
<div class="t" style="right:373.70px;top:577px;line-height:17px;font-size:15.4px;color:#4c5259;letter-spacing:-0.3px">0</div>
<div class="t" style="right:244.80px;top:577px;line-height:17px;font-size:15.4px;color:#4c5259;letter-spacing:-0.3px">300.000</div>
<div class="t" style="left:1684.40px;top:576px;line-height:18px;font-size:16.05px;color:#4c5259;transform:scaleX(0.9346);transform-origin:0 0;">Belum Lunas</div>
<div style="position:absolute;left:164px;top:653px;width:1747px;height:1px;background:#dfe2e6"></div>
<div style="position:absolute;left:182px;top:622px;width:15px;height:15px;border:1px solid #d5d9de;border-radius:3px;box-sizing:border-box;background:#fff"></div>
<div class="t" style="left:214.80px;top:622px;line-height:17px;font-size:15.7px;color:#4c5259;">INV/2030/00002</div>
<div class="t" style="left:390.10px;top:622px;line-height:17px;font-size:15.8px;color:#4c5259;">20/01/2030</div>
<div class="t" style="left:490.60px;top:621px;line-height:18px;font-size:16.31px;color:#4c5259;transform:scaleX(0.9381);transform-origin:0 0;">Muhammad Bayu Firmansyah</div>
<div class="t" style="left:783.80px;top:621px;line-height:18px;font-size:16.13px;color:#4c5259;transform:scaleX(0.9381);transform-origin:0 0;">[004] Buku Paket</div>
<div class="t" style="left:960.30px;top:621px;line-height:18px;font-size:16.1px;color:#4c5259;transform:scaleX(0.9381);transform-origin:0 0;">XII - Rekayasa Perangkat Lunak - A</div>
<div class="t" style="right:502.10px;top:622px;line-height:17px;font-size:15.4px;color:#4c5259;letter-spacing:-0.3px">300.000</div>
<div class="t" style="right:373.70px;top:622px;line-height:17px;font-size:15.4px;color:#4c5259;letter-spacing:-0.3px">0</div>
<div class="t" style="right:244.80px;top:622px;line-height:17px;font-size:15.4px;color:#4c5259;letter-spacing:-0.3px">300.000</div>
<div class="t" style="left:1684.40px;top:621px;line-height:18px;font-size:16.05px;color:#4c5259;transform:scaleX(0.9346);transform-origin:0 0;">Belum Lunas</div>
<div style="position:absolute;left:164px;top:654px;width:1747px;height:44px;background:#fbfbfc"></div>
<div style="position:absolute;left:164px;top:698px;width:1747px;height:1px;background:#dfe2e6"></div>
<div style="position:absolute;left:182px;top:667px;width:15px;height:15px;border:1px solid #d5d9de;border-radius:3px;box-sizing:border-box;background:#fff"></div>
<div class="t" style="left:214.80px;top:667px;line-height:17px;font-size:15.7px;color:#4c5259;">INV/2030/00001</div>
<div class="t" style="left:390.10px;top:667px;line-height:17px;font-size:15.8px;color:#4c5259;">20/01/2030</div>
<div class="t" style="left:490.60px;top:666px;line-height:18px;font-size:16.31px;color:#4c5259;transform:scaleX(0.9381);transform-origin:0 0;">Muhammad Rizky Ramadhan</div>
<div class="t" style="left:783.80px;top:666px;line-height:18px;font-size:16.13px;color:#4c5259;transform:scaleX(0.9381);transform-origin:0 0;">[004] Buku Paket</div>
<div class="t" style="left:960.30px;top:666px;line-height:18px;font-size:16.1px;color:#4c5259;transform:scaleX(0.9381);transform-origin:0 0;">XII - Rekayasa Perangkat Lunak - A</div>
<div class="t" style="right:502.10px;top:667px;line-height:17px;font-size:15.4px;color:#4c5259;letter-spacing:-0.3px">300.000</div>
<div class="t" style="right:373.70px;top:667px;line-height:17px;font-size:15.4px;color:#4c5259;letter-spacing:-0.3px">0</div>
<div class="t" style="right:244.80px;top:667px;line-height:17px;font-size:15.4px;color:#4c5259;letter-spacing:-0.3px">300.000</div>
<div class="t" style="left:1684.40px;top:666px;line-height:18px;font-size:16.05px;color:#4c5259;transform:scaleX(0.9346);transform-origin:0 0;">Belum Lunas</div>
<div style="position:absolute;left:164px;top:743px;width:1747px;height:1px;background:#dfe2e6"></div>
<div style="position:absolute;left:182px;top:712px;width:15px;height:15px;border:1px solid #d5d9de;border-radius:3px;box-sizing:border-box;background:#fff"></div>
<div class="t" style="left:214.80px;top:712px;line-height:17px;font-size:15.7px;color:#4c5259;">INV/2029/00013</div>
<div class="t" style="left:390.10px;top:712px;line-height:17px;font-size:15.8px;color:#4c5259;">20/12/2029</div>
<div class="t" style="left:490.60px;top:711px;line-height:18px;font-size:16.31px;color:#4c5259;transform:scaleX(0.9381);transform-origin:0 0;">Muhammad Rizky Ramadhan</div>
<div class="t" style="left:783.80px;top:711px;line-height:18px;font-size:16.13px;color:#4c5259;transform:scaleX(0.9381);transform-origin:0 0;">[004] Buku Paket</div>
<div class="t" style="left:960.30px;top:711px;line-height:18px;font-size:16.1px;color:#4c5259;transform:scaleX(0.9381);transform-origin:0 0;">XII - Rekayasa Perangkat Lunak - A</div>
<div class="t" style="right:502.10px;top:712px;line-height:17px;font-size:15.4px;color:#4c5259;letter-spacing:-0.3px">300.000</div>
<div class="t" style="right:373.70px;top:712px;line-height:17px;font-size:15.4px;color:#4c5259;letter-spacing:-0.3px">0</div>
<div class="t" style="right:244.80px;top:712px;line-height:17px;font-size:15.4px;color:#4c5259;letter-spacing:-0.3px">300.000</div>
<div class="t" style="left:1684.40px;top:711px;line-height:18px;font-size:16.05px;color:#4c5259;transform:scaleX(0.9346);transform-origin:0 0;">Belum Lunas</div>
<div style="position:absolute;left:164px;top:744px;width:1747px;height:44px;background:#fbfbfc"></div>
<div style="position:absolute;left:164px;top:788px;width:1747px;height:1px;background:#dfe2e6"></div>
<div style="position:absolute;left:182px;top:757px;width:15px;height:15px;border:1px solid #d5d9de;border-radius:3px;box-sizing:border-box;background:#fff"></div>
<div class="t" style="left:214.80px;top:757px;line-height:17px;font-size:15.7px;color:#4c5259;">INV/2029/00014</div>
<div class="t" style="left:390.10px;top:757px;line-height:17px;font-size:15.8px;color:#4c5259;">20/12/2029</div>
<div class="t" style="left:490.60px;top:756px;line-height:18px;font-size:16.31px;color:#4c5259;transform:scaleX(0.9381);transform-origin:0 0;">Muhammad Bayu Firmansyah</div>
<div class="t" style="left:783.80px;top:756px;line-height:18px;font-size:16.13px;color:#4c5259;transform:scaleX(0.9381);transform-origin:0 0;">[004] Buku Paket</div>
<div class="t" style="left:960.30px;top:756px;line-height:18px;font-size:16.1px;color:#4c5259;transform:scaleX(0.9381);transform-origin:0 0;">XII - Rekayasa Perangkat Lunak - A</div>
<div class="t" style="right:502.10px;top:757px;line-height:17px;font-size:15.4px;color:#4c5259;letter-spacing:-0.3px">300.000</div>
<div class="t" style="right:373.70px;top:757px;line-height:17px;font-size:15.4px;color:#4c5259;letter-spacing:-0.3px">0</div>
<div class="t" style="right:244.80px;top:757px;line-height:17px;font-size:15.4px;color:#4c5259;letter-spacing:-0.3px">300.000</div>
<div class="t" style="left:1684.40px;top:756px;line-height:18px;font-size:16.05px;color:#4c5259;transform:scaleX(0.9346);transform-origin:0 0;">Belum Lunas</div>
<div style="position:absolute;left:164px;top:833px;width:1747px;height:1px;background:#dfe2e6"></div>
<div style="position:absolute;left:182px;top:802px;width:15px;height:15px;border:1px solid #d5d9de;border-radius:3px;box-sizing:border-box;background:#fff"></div>
<div class="t" style="left:214.80px;top:802px;line-height:17px;font-size:15.7px;color:#4c5259;">INV/2029/00011</div>
<div class="t" style="left:390.10px;top:802px;line-height:17px;font-size:15.8px;color:#4c5259;">20/11/2029</div>
<div class="t" style="left:490.60px;top:801px;line-height:18px;font-size:16.31px;color:#4c5259;transform:scaleX(0.9381);transform-origin:0 0;">Muhammad Rizky Ramadhan</div>
<div class="t" style="left:783.80px;top:801px;line-height:18px;font-size:16.13px;color:#4c5259;transform:scaleX(0.9381);transform-origin:0 0;">[004] Buku Paket</div>
<div class="t" style="left:960.30px;top:801px;line-height:18px;font-size:16.1px;color:#4c5259;transform:scaleX(0.9381);transform-origin:0 0;">XII - Rekayasa Perangkat Lunak - A</div>
<div class="t" style="right:502.10px;top:802px;line-height:17px;font-size:15.4px;color:#4c5259;letter-spacing:-0.3px">300.000</div>
<div class="t" style="right:373.70px;top:802px;line-height:17px;font-size:15.4px;color:#4c5259;letter-spacing:-0.3px">0</div>
<div class="t" style="right:244.80px;top:802px;line-height:17px;font-size:15.4px;color:#4c5259;letter-spacing:-0.3px">300.000</div>
<div class="t" style="left:1684.40px;top:801px;line-height:18px;font-size:16.05px;color:#4c5259;transform:scaleX(0.9346);transform-origin:0 0;">Belum Lunas</div>
<div style="position:absolute;left:164px;top:834px;width:1747px;height:44px;background:#fbfbfc"></div>
<div style="position:absolute;left:164px;top:878px;width:1747px;height:1px;background:#dfe2e6"></div>
<div style="position:absolute;left:182px;top:847px;width:15px;height:15px;border:1px solid #d5d9de;border-radius:3px;box-sizing:border-box;background:#fff"></div>
<div class="t" style="left:214.80px;top:847px;line-height:17px;font-size:15.7px;color:#4c5259;">INV/2029/00012</div>
<div class="t" style="left:390.10px;top:847px;line-height:17px;font-size:15.8px;color:#4c5259;">20/11/2029</div>
<div class="t" style="left:490.60px;top:846px;line-height:18px;font-size:16.31px;color:#4c5259;transform:scaleX(0.9381);transform-origin:0 0;">Muhammad Bayu Firmansyah</div>
<div class="t" style="left:783.80px;top:846px;line-height:18px;font-size:16.13px;color:#4c5259;transform:scaleX(0.9381);transform-origin:0 0;">[004] Buku Paket</div>
<div class="t" style="left:960.30px;top:846px;line-height:18px;font-size:16.1px;color:#4c5259;transform:scaleX(0.9381);transform-origin:0 0;">XII - Rekayasa Perangkat Lunak - A</div>
<div class="t" style="right:502.10px;top:847px;line-height:17px;font-size:15.4px;color:#4c5259;letter-spacing:-0.3px">300.000</div>
<div class="t" style="right:373.70px;top:847px;line-height:17px;font-size:15.4px;color:#4c5259;letter-spacing:-0.3px">0</div>
<div class="t" style="right:244.80px;top:847px;line-height:17px;font-size:15.4px;color:#4c5259;letter-spacing:-0.3px">300.000</div>
<div class="t" style="left:1684.40px;top:846px;line-height:18px;font-size:16.05px;color:#4c5259;transform:scaleX(0.9346);transform-origin:0 0;">Belum Lunas</div>
<div style="position:absolute;left:164px;top:922px;width:1747px;height:1px;background:#dfe2e6"></div>
<div style="position:absolute;left:182px;top:892px;width:15px;height:15px;border:1px solid #d5d9de;border-radius:3px;box-sizing:border-box;background:#fff"></div>
<div class="t" style="left:214.80px;top:892px;line-height:17px;font-size:15.7px;color:#4c5259;">INV/2029/00010</div>
<div class="t" style="left:390.10px;top:892px;line-height:17px;font-size:15.8px;color:#4c5259;">20/10/2029</div>
<div class="t" style="left:490.60px;top:891px;line-height:18px;font-size:16.31px;color:#4c5259;transform:scaleX(0.9381);transform-origin:0 0;">Muhammad Bayu Firmansyah</div>
<div class="t" style="left:783.80px;top:891px;line-height:18px;font-size:16.13px;color:#4c5259;transform:scaleX(0.9381);transform-origin:0 0;">[004] Buku Paket</div>
<div class="t" style="left:960.30px;top:891px;line-height:18px;font-size:16.1px;color:#4c5259;transform:scaleX(0.9381);transform-origin:0 0;">XII - Rekayasa Perangkat Lunak - A</div>
<div class="t" style="right:502.10px;top:892px;line-height:17px;font-size:15.4px;color:#4c5259;letter-spacing:-0.3px">300.000</div>
<div class="t" style="right:373.70px;top:892px;line-height:17px;font-size:15.4px;color:#4c5259;letter-spacing:-0.3px">0</div>
<div class="t" style="right:244.80px;top:892px;line-height:17px;font-size:15.4px;color:#4c5259;letter-spacing:-0.3px">300.000</div>
<div class="t" style="left:1684.40px;top:891px;line-height:18px;font-size:16.05px;color:#4c5259;transform:scaleX(0.9346);transform-origin:0 0;">Belum Lunas</div>
<div style="position:absolute;left:1911px;top:118px;width:7px;height:790px;background:#f7f8fa"></div>
<div style="position:absolute;left:1911px;top:118px;width:8px;height:350.5px;background:#8a8a8a;border-radius:4px"></div>
<div style="position:absolute;left:463px;top:106.4px;width:863.4px;height:270.6px;background:#fff;border:4px solid #ff0000;border-right-width:3.5px;border-radius:3px;box-sizing:border-box"></div>
<div style="position:absolute;left:484px;top:253px;width:249px;height:29.7px;background:#ebebeb"></div>
<div style="position:absolute;left:484px;top:292px;width:249px;height:1px;background:#dee2e6"></div>
<div style="position:absolute;left:751.5px;top:127px;width:1px;height:206px;background:#dee2e6"></div>
<div style="position:absolute;left:770px;top:317.5px;width:277px;height:1px;background:#dee2e6"></div>
<div style="position:absolute;left:1065px;top:127px;width:1px;height:231px;background:#dee2e6"></div>
<div class="t" style="left:526.00px;top:133px;line-height:17px;font-size:15.7px;font-weight:700;color:#212529;">Penyaring</div>
<div class="t" style="left:507.30px;top:170px;line-height:17px;font-size:15.99px;color:#4c5259;transform:scaleX(0.9381);transform-origin:0 0;">NON SPP</div>
<div class="t" style="left:507.30px;top:200px;line-height:17px;font-size:15.99px;color:#4c5259;transform:scaleX(0.9381);transform-origin:0 0;">SPP</div>
<div class="t" style="left:507.50px;top:231px;line-height:16px;font-size:14.5px;font-weight:700;color:#50565c;">Tagihan Belum Lunas</div>
<div class="t" style="left:507.30px;top:260px;line-height:17px;font-size:15.99px;color:#3b4046;transform:scaleX(0.9381);transform-origin:0 0;">Tagihan Sudah Lunas</div>
<div class="t" style="left:507.30px;top:308px;line-height:18px;font-size:16.2px;color:#4c5259;transform:scaleX(0.9381);transform-origin:0 0;">Tambahkan Penyaring Sendiri</div>
<div class="t" style="left:815.40px;top:133px;line-height:18px;font-size:16.3px;font-weight:700;color:#212529;">Dikelompokkan</div>
<div class="t" style="left:788.70px;top:158px;line-height:18px;font-size:16.3px;font-weight:700;color:#212529;">berdasarkan</div>
<div class="t" style="left:793.40px;top:194px;line-height:18px;font-size:16.1px;color:#4c5259;transform:scaleX(0.9381);transform-origin:0 0;">Santri</div>
<div class="t" style="left:793.40px;top:225px;line-height:18px;font-size:16.1px;color:#4c5259;transform:scaleX(0.9381);transform-origin:0 0;">Komponen</div>
<div class="t" style="left:793.40px;top:255px;line-height:18px;font-size:16.1px;color:#4c5259;transform:scaleX(0.9381);transform-origin:0 0;">Periode Tagihan</div>
<div class="t" style="left:793.40px;top:285px;line-height:18px;font-size:16.1px;color:#4c5259;transform:scaleX(0.9381);transform-origin:0 0;">Ruang Kelas</div>
<div class="t" style="left:793.40px;top:335px;line-height:18px;font-size:16.31px;color:#4c5259;transform:scaleX(0.9381);transform-origin:0 0;">Tambahkan Grup Kustom</div>
<div class="t" style="left:1128.40px;top:133px;line-height:17px;font-size:15.8px;font-weight:700;color:#212529;">Favorit</div>
<div class="t" style="left:1107.70px;top:168px;line-height:18px;font-size:16.31px;color:#4c5259;transform:scaleX(0.9381);transform-origin:0 0;">Simpan pencarian saat ini</div>
<svg style="position:absolute;left:500px;top:132px" width="20" height="18" viewBox="0 0 20 18"><path d="M2 2.8 H15.7 L11.2 7.8 V15.8 L8.3 13.2 V7.8 Z" fill="#0c5953"/></svg>
<svg style="position:absolute;left:488px;top:230px" width="16" height="16" viewBox="0 0 16 16"><path d="M3.3 8 L6.4 11 L12.4 4.8" fill="none" stroke="#129e60" stroke-width="2.2"/></svg>
<svg style="position:absolute;left:786px;top:130px" width="22" height="22" viewBox="0 0 22 22"><path d="M11 2.6 L19 6.6 L11 10.6 L3 6.6 Z" fill="#129e60"/><path d="M4.6 9.5 L3 10.4 L11 14.4 L19 10.4 L17.4 9.5 L11 12.7 Z" fill="#129e60"/><path d="M4.6 13.3 L3 14.2 L11 18.2 L19 14.2 L17.4 13.3 L11 16.5 Z" fill="#129e60"/></svg>
<svg style="position:absolute;left:1100px;top:130px" width="22" height="22" viewBox="0 0 22 22"><path d="M10.40 2.50 L12.93 7.72 L18.67 8.51 L14.49 12.53 L15.51 18.24 L10.40 15.50 L5.29 18.24 L6.31 12.53 L2.13 8.51 L7.87 7.72 Z" fill="#f3c800" stroke="#f3c800" stroke-width="1" stroke-linejoin="round"/></svg>
<svg style="position:absolute;left:1285px;top:170px" width="16" height="12" viewBox="0 0 16 12"><path d="M4 4 H12.5 L8.25 8.8 Z" fill="#555b62"/></svg>
<svg style="position:absolute;left:1020px;top:338px" width="16" height="12" viewBox="0 0 16 12"><path d="M4.3 4.2 H13 L8.65 8.2 Z" fill="#888e95"/></svg>
<div style="position:absolute;left:1289px;top:57.2px;width:37.2px;height:43.6px;background:#c8e6dc;border:4px solid #ff0000;border-right-width:3.3px;border-bottom-width:3.6px;border-radius:3px;box-sizing:border-box"></div>
<svg style="position:absolute;left:1289px;top:57px" width="37" height="44" viewBox="0 0 37 44"><path d="M15.8 20.9 L25 20.9 L20.4 25.9 Z" fill="#222" transform="rotate(180 20.4 23.4)"/></svg>
<svg style="position:absolute;left:1330px;top:55px" width="100" height="50" viewBox="0 0 100 50"><path d="M10 23.8 H92.8" stroke="#ff1a1a" stroke-width="2.2"/><path d="M25.6 8 L10 23.8 L25.6 39.4" fill="none" stroke="#ff1a1a" stroke-width="2.2"/></svg></body></html>
